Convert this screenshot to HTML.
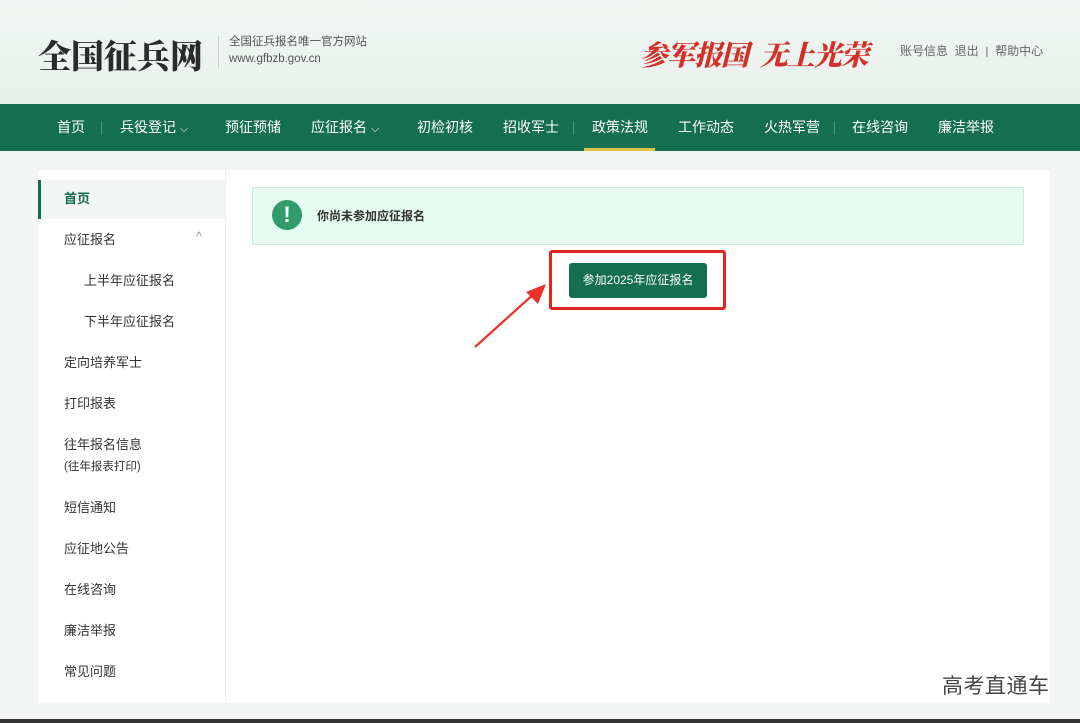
<!DOCTYPE html>
<html><head><meta charset="utf-8"><style>
*{margin:0;padding:0;box-sizing:border-box}
body{width:1080px;height:723px;overflow:hidden;background:#f3f5f4;font-family:"Liberation Sans","Noto Sans CJK SC",sans-serif;position:relative}
.hdr{position:absolute;left:0;top:0;width:1080px;height:104px;background:linear-gradient(180deg,#f1f6f3,#e9f1ec)}
.logo{position:absolute;left:38px;top:31px;font-family:"Noto Serif CJK SC",serif;font-weight:900;font-size:33px;color:#2b2b2b}
.vl{position:absolute;left:218px;top:36px;width:1px;height:32px;background:#ccc}
.sub{position:absolute;left:229px;top:34px;font-size:11.5px;color:#555;line-height:17px}
.slogan{position:absolute;left:640px;top:34px;font-family:"Noto Serif CJK SC",serif;font-weight:900;font-size:28px;color:#d3302a;font-style:italic;letter-spacing:-1px}
.links{position:absolute;left:900px;top:42px;font-size:12px;color:#666}
.nav{position:absolute;left:0;top:104px;width:1080px;height:47px;background:#136f4f}
.nav span{position:absolute;top:13px;font-size:14px;color:#fff;white-space:nowrap}
.nav i{position:absolute;top:17px;width:1px;height:14px;background:#4f937a}
.ul{position:absolute;left:584px;top:148px;width:71px;height:3px;background:#e0c44a}
.panel{position:absolute;left:38px;top:170px;width:1012px;height:533px;background:#fff}
.side{position:absolute;left:38px;top:168px;width:188px;height:535px;border-right:1px solid #eee}
.side div{position:absolute;left:26px;font-size:13px;color:#333;white-space:nowrap}
.act{position:absolute;left:38px;top:180px;width:188px;height:39px;background:#f4f5f5;border-left:3px solid #136f4f}
.alert{position:absolute;left:252px;top:187px;width:772px;height:58px;background:#e6fcf1;border:1px solid #cfe9dc}
.ic{position:absolute;left:272px;top:200px;width:30px;height:30px;border-radius:50%;background:#2f9c6a;color:#fff;text-align:center;font-weight:bold;font-size:22px;line-height:30px}
.at{position:absolute;left:317px;top:207px;font-size:12px;font-weight:bold;color:#333}
.redbox{position:absolute;left:549px;top:250px;width:177px;height:60px;border:3px solid #e0261f;border-radius:3px}
.btn{position:absolute;left:569px;top:263px;width:138px;height:35px;background:#136f4f;border-radius:3px;color:#fff;font-size:12px;text-align:center;line-height:34px}
.wm{position:absolute;left:942px;top:670px;font-size:21px;color:#444;letter-spacing:0.5px}
.bot{position:absolute;left:0;top:719px;width:1080px;height:4px;background:#333}
</style></head><body>
<div class="hdr"></div>
<div class="logo">全国征兵网</div>
<div class="vl"></div>
<div class="sub">全国征兵报名唯一官方网站<br>www.gfbzb.gov.cn</div>
<div class="slogan">参军报国&nbsp;&nbsp;无上光荣</div>
<div class="links">账号信息&nbsp;&nbsp;退出&nbsp;&nbsp;|&nbsp;&nbsp;帮助中心</div>
<div class="nav">
<span style="left:57px">首页</span><i style="left:101px"></i>
<span style="left:120px">兵役登记 <small style="font-size:11px">⌵</small></span>
<span style="left:225px">预征预储</span>
<span style="left:311px">应征报名 <small style="font-size:11px">⌵</small></span>
<span style="left:417px">初检初核</span>
<span style="left:503px">招收军士</span><i style="left:573px"></i>
<span style="left:592px">政策法规</span>
<span style="left:678px">工作动态</span>
<span style="left:764px">火热军营</span><i style="left:834px"></i>
<span style="left:852px">在线咨询</span>
<span style="left:938px">廉洁举报</span>
</div>
<div class="ul"></div>
<div class="panel"></div>
<div class="act"></div>
<div class="side">
<div style="top:20px;color:#136f4f;font-weight:bold">首页</div>
<div style="top:61px">应征报名<span style="position:absolute;left:132px;color:#999">^</span></div>
<div style="top:102px;left:46px">上半年应征报名</div>
<div style="top:143px;left:46px">下半年应征报名</div>
<div style="top:184px">定向培养军士</div>
<div style="top:225px">打印报表</div>
<div style="top:266px;line-height:21px">往年报名信息<br><span style="font-size:11.5px">(往年报表打印)</span></div>
<div style="top:329px">短信通知</div>
<div style="top:370px">应征地公告</div>
<div style="top:411px">在线咨询</div>
<div style="top:452px">廉洁举报</div>
<div style="top:493px">常见问题</div>
</div>
<div class="alert"></div>
<div class="ic">!</div>
<div class="at">你尚未参加应征报名</div>
<div class="redbox"></div>
<div class="btn">参加2025年应征报名</div>
<svg style="position:absolute;left:470px;top:280px" width="80" height="72"><line x1="5" y1="67" x2="66" y2="12" stroke="#e8322b" stroke-width="2.2"/><polygon points="76,4 56,12 68,24" fill="#e8322b"/></svg>
<div class="wm">高考直通车</div>
<div class="bot"></div>
</body></html>
